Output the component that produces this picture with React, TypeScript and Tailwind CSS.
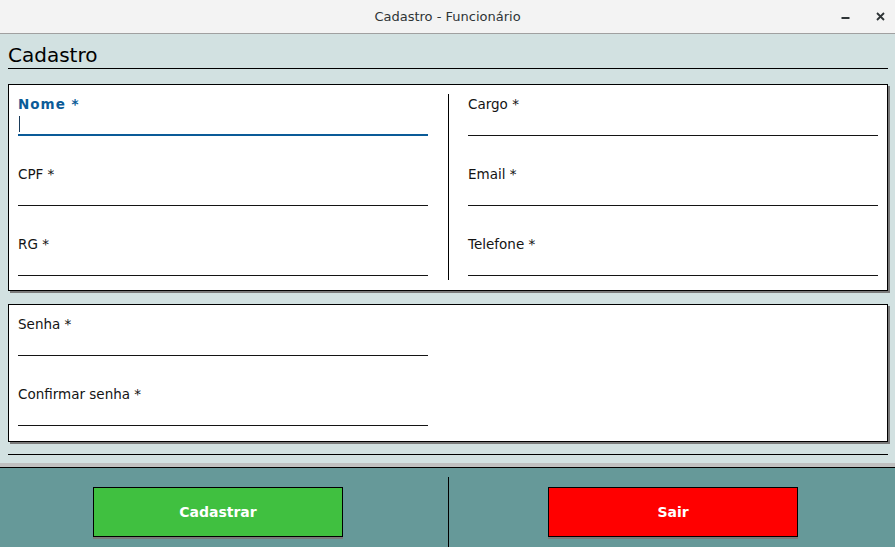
import React from "react";

const font = { fontFamily: '"DejaVu Sans", "Liberation Sans", sans-serif' };

function Field({ label, focused = false }: { label: string; focused?: boolean }) {
  return (
    <div className="w-[410px]">
      <div
        className={
          focused
            ? "h-[20px] leading-[18px] text-[13.5px] font-bold tracking-[1px] text-[#0a5b98]"
            : "h-[20px] leading-[18px] text-[13.5px] text-[#141414]"
        }
      >
        {label}
      </div>
      {focused ? (
        <div className="h-[21px] border-b-2 border-[#0a5b98] relative">
          <span className="absolute left-[1px] top-[1px] w-[1px] h-[16px] bg-[#1a3b5a]" />
        </div>
      ) : (
        <div className="h-[21px] border-b border-[#141414]" />
      )}
    </div>
  );
}

export default function App() {
  return (
    <div className="w-[895px] h-[547px] flex flex-col overflow-hidden bg-[#d2e1e1]" style={font}>
      {/* Title bar */}
      <div className="h-[34px] shrink-0 bg-[#f3f3f3] border-b border-[#a0a0a0] relative flex items-center justify-center">
        <span className="text-[13px] text-[#2e3436]">Cadastro - Funcionário</span>
        <svg className="absolute left-[841px] top-[16px]" width="10" height="4" viewBox="0 0 10 4">
          <rect x="0.5" y="1" width="8" height="2" fill="#2e3436" />
        </svg>
        <svg className="absolute left-[876px] top-[12px]" width="9" height="9" viewBox="0 0 9 9">
          <path d="M1 1 L8 8 M8 1 L1 8" stroke="#2e3436" strokeWidth="1.8" />
        </svg>
      </div>

      {/* Content */}
      <div className="flex-1 pl-[8px] pr-[7px] flex flex-col">
        <div className="h-[35px] shrink-0 border-b border-black pt-[9px]">
          <div className="text-[20px] leading-[24px] text-black">Cadastro</div>
        </div>

        <div className="mt-[15px] h-[207px] shrink-0 bg-white border border-black shadow-[2px_2px_0_0_#7a7a7a] pt-[9px] pl-[9px] flex">
          <div className="w-[410px] h-[186px] pt-[1px] flex flex-col gap-[29px]">
            <Field label="Nome *" focused />
            <Field label="CPF *" />
            <Field label="RG *" />
          </div>
          <div className="ml-[20px] w-[1px] h-[186px] bg-black" />
          <div className="ml-[19px] w-[410px] h-[186px] pt-[1px] flex flex-col gap-[29px]">
            <Field label="Cargo *" />
            <Field label="Email *" />
            <Field label="Telefone *" />
          </div>
        </div>

        <div className="mt-[13px] h-[138px] shrink-0 bg-white border border-black shadow-[2px_2px_0_0_#7a7a7a] pt-[10px] pl-[9px] flex flex-col gap-[29px]">
          <Field label="Senha *" />
          <Field label="Confirmar senha *" />
        </div>

        <div className="mt-[12px] h-[1px] shrink-0 bg-black" />
      </div>

      <div className="h-[4px] shrink-0 bg-[#c0c0c0]" />

      {/* Footer */}
      <div className="h-[80px] shrink-0 bg-[#669999] border-t border-black flex">
        <div className="w-[448px] pt-[19px] pl-[93px]">
          <button className="w-[250px] h-[50px] bg-[#40c040] border border-black shadow-[0_2px_0_0_#7a7a7a] text-white text-[14px] font-bold" style={font}>
            Cadastrar
          </button>
        </div>
        <div className="mt-[9px] w-[1px] h-[71px] bg-black" />
        <div className="flex-1 pt-[19px] pl-[99px]">
          <button className="w-[250px] h-[50px] bg-[#ff0000] border border-black shadow-[0_2px_0_0_#7a7a7a] text-white text-[14px] font-bold" style={font}>
            Sair
          </button>
        </div>
      </div>
    </div>
  );
}
